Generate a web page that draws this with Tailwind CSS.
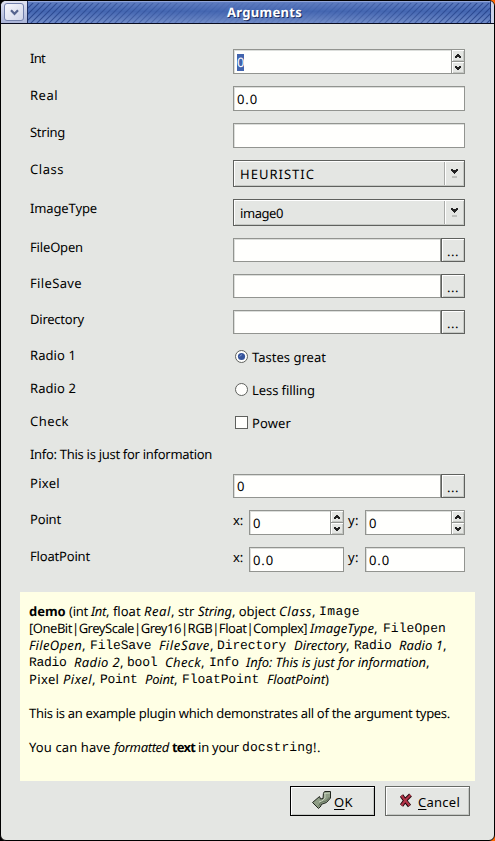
<!DOCTYPE html>
<html lang="en">
<head>
<meta charset="utf-8">
<title>Arguments</title>
<script src="https://cdn.jsdelivr.net/npm/@tailwindcss/browser@4"></script>
</head>
<body class="w-[495px] h-[841px] overflow-hidden bg-[linear-gradient(to_right,#000_50%,#f60_50%)] font-['Noto_Sans',sans-serif] text-[13px] leading-[20px] text-black [text-rendering:geometricPrecision]">
<svg class="hidden">
  <symbol id="up" viewBox="0 0 6 4"><path d="M2 0h2v1h1v1h1v2h-2v-1h-2v1h-2v-2h1v-1h1z" fill="#222"/></symbol>
  <symbol id="down" viewBox="0 0 6 4"><path d="M2 4h2v-1h1v-1h1v-2h-2v1h-2v-1h-2v2h1v1h1z" fill="#222"/></symbol>
  <symbol id="drop" viewBox="0 0 8 9"><path d="M0 0h2v1h3v-1h2v2h-1v1h-1v1h-1v1h-1v-1h-1v-1h-1v-1h-1z" fill="#222"/><path d="M1 7h5v2h-5z" fill="#bdbfbc"/></symbol>
</svg>
<div class="w-[495px] h-[841px] flex flex-col rounded-[6px] border border-black bg-[#e4e6e3] overflow-hidden">
  <header class="h-[23px] shrink-0 flex border-b border-[#080c20]">
    <div class="w-[27px] flex items-center justify-center bg-[linear-gradient(#e0e3f2,#a9b4d8)] border-r border-[#1c2c60]">
      <div class="w-[20px] h-[18px] rounded-[3px] border border-[#7381ac] bg-[linear-gradient(135deg,#f8f8fd,#d0d5e9)] flex items-center justify-center">
        <svg width="9" height="7" viewBox="0 0 9 7"><path d="M1 1.2L4.5 4.8L8 1.2" fill="none" stroke="#56648f" stroke-width="2.2"/></svg>
      </div>
    </div>
    <div class="flex-1 relative flex justify-center border-t border-[#92a5d8] bg-[linear-gradient(#5f7dc0,#4567b2_45%,#6f8ac6)]">
      <svg class="absolute inset-0" width="463" height="21">
        <defs>
          <pattern id="st" width="6" height="6" patternUnits="userSpaceOnUse"><path d="M-1 7L7 -1M-1 1L1 -1M5 7L7 5" stroke="#223f87" stroke-width="1.1"/></pattern>
          <linearGradient id="fade"><stop offset="0" stop-color="#fff" stop-opacity=".85"/><stop offset=".42" stop-color="#fff" stop-opacity=".12"/><stop offset=".6" stop-color="#fff" stop-opacity=".12"/><stop offset="1" stop-color="#fff" stop-opacity=".85"/></linearGradient>
          <mask id="m"><rect width="463" height="21" fill="url(#fade)"/></mask>
        </defs>
        <rect width="463" height="20" y="1" fill="url(#st)" mask="url(#m)"/>
      </svg>
      <b class="relative ml-[11px] leading-[21px] text-white whitespace-pre [text-shadow:1px_1px_0_#1c2d60]" data-w="75">Arguments</b>
    </div>
    <div class="w-[4px] border-l border-[#1c2c60] bg-[#ccd3ea]"></div>
  </header>

  <main class="pt-[24px] pl-[29px]" id="form"></main>

  <section class="ml-[19px] mt-[9px] w-[455px] h-[189px] shrink-0 bg-[#ffffe5] pt-[11px] pl-[9px] leading-[17px]" id="doc">
    <p class="flex h-[17px] whitespace-pre"><b data-w="40">demo </b><span data-w="22">(int </span><i data-w="15">Int</i><span data-w="38">, float </span><i data-w="27">Real</i><span data-w="27">, str </span><i data-w="34">String</i><span data-w="47">, object </span><i data-w="33">Class</i><span data-w="7">, </span><code data-w="41">Image</code></p>
    <p class="flex h-[17px] whitespace-pre"><span data-w="281">[OneBit|GreyScale|Grey16|RGB|Float|Complex] </span><i data-w="64">ImageType</i><span data-w="9">, </span><code data-w="63">FileOpen</code></p>
    <p class="flex h-[17px] whitespace-pre"><i data-w="53">FileOpen</i><span data-w="8">, </span><code data-w="69">FileSave </code><i data-w="51">FileSave</i><span data-w="7">, </span><code data-w="77">Directory </code><i data-w="52">Directory</i><span data-w="8">, </span><code data-w="45">Radio </code><i data-w="44">Radio 1</i><span>,</span></p>
    <p class="flex h-[17px] whitespace-pre"><code data-w="45">Radio </code><i data-w="46">Radio 2</i><span data-w="7">, </span><code data-w="38">bool </code><i data-w="36">Check</i><span data-w="8">, </span><code data-w="37">Info </code><i data-w="180">Info: This is just for information</i><span>,</span></p>
    <p class="flex h-[17px] whitespace-pre"><span data-w="34">Pixel </span><i data-w="29">Pixel</i><span data-w="8">, </span><code data-w="45">Point </code><i data-w="29">Point</i><span data-w="8">, </span><code data-w="85">FloatPoint </code><i data-w="58">FloatPoint</i><span>)</span></p>
    <p class="flex h-[17px] mt-[17px] whitespace-pre"><span data-w="421">This is an example plugin which demonstrates all of the argument types.</span></p>
    <p class="flex h-[17px] mt-[17px] whitespace-pre"><span data-w="85">You can have </span><i data-w="58">formatted </i><b data-w="23">text</b><span data-w="47">&nbsp;in your </span><code data-w="71">docstring</code><span data-w="8">!.</span></p>
  </section>

  <footer class="flex gap-[10px] pl-[289px] mt-[5px]">
    <button class="w-[85px] h-[30px] flex items-center border border-black shadow-[inset_1px_1px_#fff,inset_-1px_-1px_#c5c8c4] pl-[20px]">
      <svg class="mt-[-3px] shrink-0" width="21" height="20" viewBox="0 0 21 20"><path d="M12.5 2.5L14 1.5L19.500 1.500V8L15.500 12.500L10 14.500L10 16L7.500 18.500L1.500 12.500L8.500 6.500L9.500 9L12 8.500Z" fill="#8f9e86" stroke="#20251e"/><path d="M12.500 3L14 4V8L11 11L8 12M14 3.500L19 3" fill="none" stroke="#c3ceb9"/><path d="M18.500 7L15 11L9.500 12.500L7.500 16.500" fill="none" stroke="#65745f"/></svg>
      <span class="ml-[2px] whitespace-pre pt-[1px]" data-w="19"><u class="underline-offset-2">O</u>K</span>
    </button>
    <button class="w-[85px] h-[30px] flex items-center border border-[#686b67] shadow-[inset_1px_1px_#fff,inset_-1px_-1px_#c5c8c4] pl-[13px]">
      <svg class="mt-[-1px] shrink-0" width="14" height="15" viewBox="0 0 14 15"><path d="M2.500 2.500L5 6L10.500 13M11.500 2L7 6.500L2.500 12.500" fill="none" stroke="#20050a" stroke-width="4" stroke-linejoin="round"/><path d="M2.500 2.500L5 6L10.500 12.500M11.500 2L7 6.500L2.500 12.500" fill="none" stroke="#b23448" stroke-width="2.200"/></svg>
      <span class="ml-[5px] whitespace-pre pt-[1px]" data-w="42"><u class="underline-offset-2">C</u>ancel</span>
    </button>
  </footer>
</div>

<script>
const span = (t, w, c = '') => `<span class="whitespace-pre ${c}" data-w="${w}">${t}</span>`;
const BOX = 'border border-[#929490] bg-[#fffffd] shadow-[inset_1px_1px_#dcdedb]';
const RAISED = 'bg-[#e4e6e3] shadow-[inset_1px_1px_#fff,inset_-1px_-1px_#c5c8c4]';
const entry = (w, h, v = '', vw = 0) => `<div class="${BOX} flex items-center pl-[3px] shrink-0" style="width:${w}px;height:${h}px">${v && span(v, vw)}</div>`;
const arrow = id => `<div class="flex-1 ${RAISED} flex items-center justify-center"><svg width="6" height="4"><use href="#${id}"/></svg></div>`;
const spin = (w, sel) => `<div class="${BOX} flex h-[25px] shrink-0" style="width:${w}px"><div class="flex-1 flex items-center pl-[3px] pt-[1px]"><span class="${sel ? 'bg-[#4264ae] text-white' : ''} h-[17px] leading-[16px] w-[7px]">0</span></div><div class="w-[13px] flex flex-col border-l border-[#929490] gap-px bg-[#929490]">${arrow('up')}${arrow('down')}</div></div>`;
const file = (v = '') => `<div class="flex">${entry(208, 24, v, 7)}<div class="w-[24px] h-[24px] border border-[#5f615e] ${RAISED} flex justify-center pt-[4px] leading-[17px]">${span('...', 12)}</div></div>`;
const combo = (v, w) => `<div class="w-[232px] h-[27px] border border-[#5f615e] ${RAISED} flex"><div class="flex-1 flex items-center pl-[6px]">${span(v, w)}</div><div class="w-[20px] my-[1px] border-l border-[#a9aba8] shadow-[inset_1px_0_#fff] flex justify-center pt-[7px]"><svg width="8" height="9"><use href="#drop"/></svg></div></div>`;
const radio = (on, t, w) => `<div class="flex items-center h-[20px] pl-[2px]"><svg width="13" height="13" class="mr-[4px]"><circle cx="6.5" cy="6.5" r="6" fill="#fffffd" stroke="#5f615e"/>${on ? '<circle cx="6.5" cy="6.5" r="3.600" fill="#36549c"/><path d="M4.500 6.500L7 4.500" stroke="#8098d0"/>' : ''}</svg>${span(t, w, 'pt-[1px]')}</div>`;
const check = (t, w) => `<div class="flex items-center h-[20px] pl-[2px]"><div class="w-[13px] h-[13px] mr-[4px] border border-[#5f615e] bg-[#fffffd]"></div>${span(t, w, 'pt-[1px]')}</div>`;
const pair = (a, b) => `<div class="flex"><div class="w-[16px]">${span('x:', 10)}</div>${a}<div class="w-[21px] pl-[4px]">${span('y:', 11)}</div>${b}</div>`;
const rows = [
  ['Int', 15, 37, spin(232, true)], ['Real', 28, 37, entry(232, 25, '0.0', 21)], ['String', 35, 37, entry(232, 25)],
  ['Class', 34, 39, combo('HEURISTIC', 75)], ['ImageType', 67, 39, combo('image0', 43)],
  ['FileOpen', 53, 36, file()], ['FileSave', 52, 36, file()], ['Directory', 54, 36, file()],
  ['Radio 1', 46, 33, radio(true, 'Tastes great', 74)], ['Radio 2', 46, 33, radio(false, 'Less filling', 63)], ['Check', 39, 33, check('Power', 39)],
  ['Info: This is just for information', 182, 29, ''], ['Pixel', 30, 36, file('0')],
  ['Point', 31, 37, pair(spin(95), spin(100))], ['FloatPoint', 60, 37, pair(entry(95, 25, '0.0', 21), entry(100, 25, '0.0', 21))]
];
document.getElementById('form').innerHTML = rows.map(([l, w, h, f]) =>
  `<div class="flex items-start pt-px" style="height:${h}px"><label class="w-[203px] shrink-0 -mt-px">${span(l, w)}</label>${f}</div>`).join('');
document.querySelectorAll('code').forEach(c => c.className = "font-['Liberation_Mono',monospace]");
// Spread each run of text to its designed advance width, again whenever styles or fonts settle.
const runs = [...document.querySelectorAll('[data-w]')];
function fit() {
  for (const e of runs) {
    const r = document.createRange(); r.selectNodeContents(e);
    let s = 0;
    e.style.letterSpacing = '0px';
    for (let k = 0; k < 3; k++) {
      s += (e.dataset.w - r.getBoundingClientRect().width) / e.textContent.length;
      e.style.letterSpacing = s + 'px';
    }
  }
}
fit();
addEventListener('load', fit);
document.fonts.ready.then(fit);
new ResizeObserver(fit).observe(document.getElementById('doc'));
[50, 150, 300].forEach(t => setTimeout(fit, t));
</script>
</body>
</html>
